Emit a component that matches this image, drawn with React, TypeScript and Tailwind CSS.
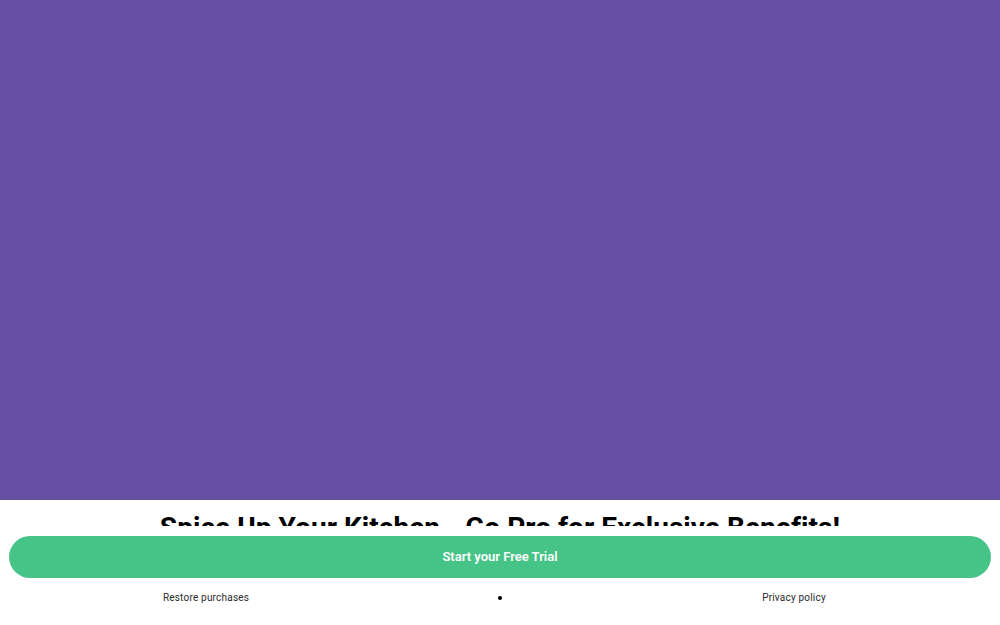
import React from 'react';

const App: React.FC = () => {
  return (
    <div className="relative h-[625px] w-[1000px] overflow-hidden bg-white font-['Roboto',sans-serif]">
      {/* hero area */}
      <div className="h-[500px] w-full bg-[#6750a4]" />

      {/* scrolling content, partly hidden under the bottom panel */}
      <div className="px-4 pt-[11px]">
        <h1 className="text-center text-[28px] font-bold leading-[34px] tracking-[0.05px] text-black">
          Spice Up Your Kitchen - Go Pro for Exclusive Benefits!
        </h1>
      </div>

      {/* bottom panel */}
      <div className="absolute bottom-0 left-0 right-0 h-[99px] bg-white px-[9px] pt-[10px]">
        <button className="flex h-[42px] w-full items-center justify-center rounded-full bg-[#46c386] text-[13px] font-semibold text-white">
          Start your Free Trial
        </button>
        <div className="mt-[12px] grid grid-cols-[1fr_194px_1fr] items-center text-[10px] tracking-[0.2px] text-[#2a2a2a]">
          <span className="text-center">Restore purchases</span>
          <span className="flex justify-center">
            <span className="h-[4px] w-[4px] rounded-full bg-black" />
          </span>
          <span className="text-center">Privacy policy</span>
        </div>
      </div>
    </div>
  );
};

export default App;
